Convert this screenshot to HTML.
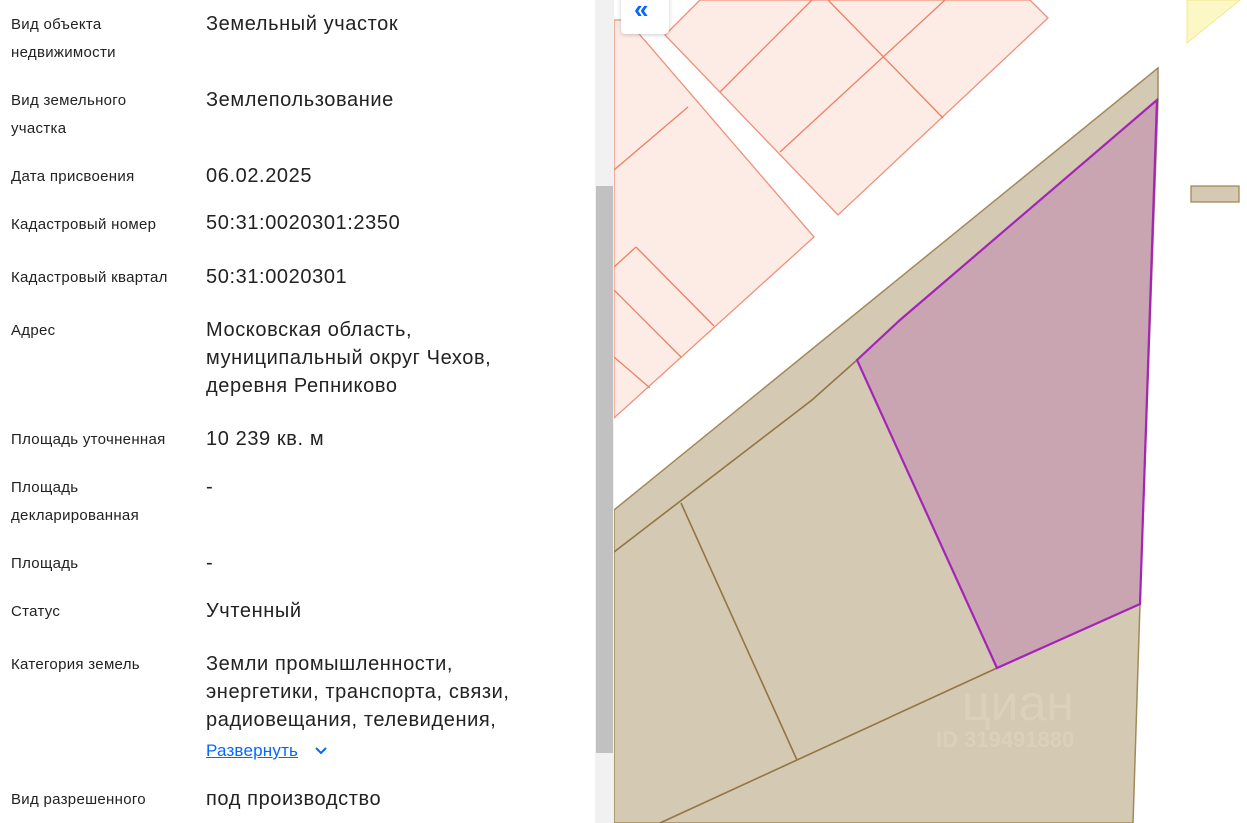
<!DOCTYPE html>
<html><head><meta charset="utf-8"><style>
body{margin:0;width:1247px;height:823px;overflow:hidden;background:#fff;font-family:"Liberation Sans",Arial,sans-serif;position:relative}
.l{position:absolute;left:11px;font-size:15px;letter-spacing:0.3px;color:#222;line-height:28px;white-space:nowrap;margin-top:1px}
.v{position:absolute;left:206px;font-size:20px;letter-spacing:0.6px;color:#222;line-height:28px;white-space:nowrap;margin-top:1px}
</style></head><body>
<div class="l" style="top:10px">Вид объекта</div>
<div class="l" style="top:38px">недвижимости</div>
<div class="l" style="top:86px">Вид земельного</div>
<div class="l" style="top:114px">участка</div>
<div class="l" style="top:162px">Дата присвоения</div>
<div class="l" style="top:210px">Кадастровый номер</div>
<div class="l" style="top:263px">Кадастровый квартал</div>
<div class="l" style="top:316px">Адрес</div>
<div class="l" style="top:425px">Площадь уточненная</div>
<div class="l" style="top:473px">Площадь</div>
<div class="l" style="top:501px">декларированная</div>
<div class="l" style="top:549px">Площадь</div>
<div class="l" style="top:597px">Статус</div>
<div class="l" style="top:650px">Категория земель</div>
<div class="l" style="top:785px">Вид разрешенного</div>

<div class="v" style="top:9px">Земельный участок</div>
<div class="v" style="top:85px">Землепользование</div>
<div class="v" style="top:161px">06.02.2025</div>
<div class="v" style="top:208px">50:31:0020301:2350</div>
<div class="v" style="top:262px">50:31:0020301</div>
<div class="v" style="top:315px">Московская область,</div>
<div class="v" style="top:343px">муниципальный округ Чехов,</div>
<div class="v" style="top:371px">деревня Репниково</div>
<div class="v" style="top:424px">10 239 кв. м</div>
<div class="v" style="top:472px">-</div>
<div class="v" style="top:548px">-</div>
<div class="v" style="top:596px">Учтенный</div>
<div class="v" style="top:649px">Земли промышленности,</div>
<div class="v" style="top:677px">энергетики, транспорта, связи,</div>
<div class="v" style="top:705px">радиовещания, телевидения,</div>
<div style="position:absolute;left:206px;top:739px;font-size:17px;letter-spacing:0.2px;line-height:24px;color:#0468ff;text-decoration:underline">Развернуть</div>
<svg style="position:absolute;left:313px;top:744px" width="16" height="14"><path d="M3 4l5 5 5-5" stroke="#0468ff" stroke-width="2" fill="none"/></svg>
<div class="v" style="top:784px">под производство</div>

<div style="position:absolute;left:595px;top:0;width:19px;height:823px;background:#f1f1f1"></div>
<div style="position:absolute;left:596px;top:186px;width:17px;height:567px;background:#c1c1c1"></div>

<svg style="position:absolute;left:614px;top:0" width="633" height="823" viewBox="614 0 633 823">
<g fill="#fdebe6" stroke="#f09078" stroke-width="1.3">
<polygon points="665,35 700,0 1030,0 1048,18 838,215"/>
<polygon points="614,20 614,418 814,237 640,35 625,20"/>
</g>
<g stroke="#f07e62" stroke-width="1.3" fill="none">
<line x1="720" y1="92" x2="812" y2="0"/>
<line x1="780" y1="152" x2="945" y2="0"/>
<line x1="828" y1="0" x2="943" y2="118"/>
<line x1="614" y1="170" x2="688" y2="107"/>
<line x1="614" y1="267" x2="636" y2="247"/>
<line x1="636" y1="247" x2="714" y2="326"/>
<line x1="614" y1="290" x2="681" y2="357"/>
<line x1="614" y1="357" x2="650" y2="388"/>
</g>
<polygon points="614,510 1158,68 1158,100 1140,604 1133,823 614,823" fill="#d4c9b2" stroke="#a08a5a" stroke-width="1.5"/>
<g stroke="#937544" stroke-width="1.6" fill="none">
<polyline points="614,552 812,400 857,360"/>
<line x1="681" y1="503" x2="797" y2="760"/>
<line x1="660" y1="823" x2="997" y2="668"/>
</g>
<polygon points="857,360 900,320 1157,100 1140,604 997,668" fill="#c9a5b2" stroke="#a424b8" stroke-width="2.2"/>
<rect x="1191" y="186" width="48" height="16" fill="#d4c9b2" stroke="#a08a5a" stroke-width="1.3"/>
<polygon points="1187,0 1240,0 1187,43" fill="#fcf8c6" stroke="#f0e890"/>
<text x="962" y="720" font-family="Liberation Sans,sans-serif" font-size="50" fill="#fff" fill-opacity="0.15">циан</text>
<text x="936" y="747" font-family="Liberation Sans,sans-serif" font-size="22" font-weight="bold" fill="#fff" fill-opacity="0.15">ID 319491880</text>
</svg>
<div style="position:absolute;left:621px;top:-6px;width:48px;height:40px;background:#fff;border-radius:4px;box-shadow:0 1px 4px rgba(0,0,0,.2)"></div>
<div style="position:absolute;left:634px;top:-6px;font-size:26px;color:#0468ff;font-weight:bold;line-height:30px">«</div>
</body></html>
